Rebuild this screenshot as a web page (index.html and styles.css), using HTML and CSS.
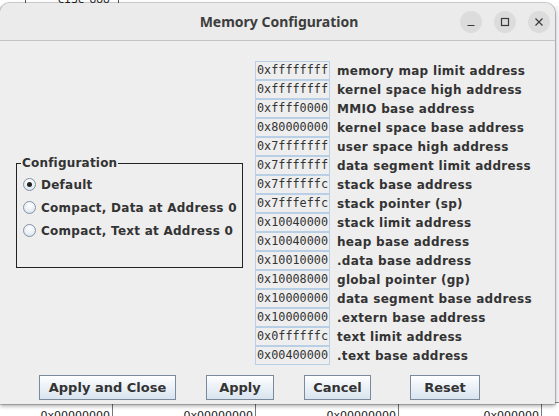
FILE: index.html
```html
<!DOCTYPE html>
<html>
<head>
<meta charset="utf-8">
<link rel="stylesheet" href="styles.css">
</head>
<body>
<div class="desktop">
  <div class="desk-top">
    <span class="dt-line l1"></span><span class="dt-text">c13c_ooo</span><span class="dt-line l2"></span>
  </div>
  <div class="desk-bottom">
    <span class="db-cell c1">0x00000000</span>
    <span class="db-cell">0x00000000</span>
    <span class="db-cell">0x00000000</span>
    <span class="db-cell">0x000000</span>
  </div>
</div>

<div class="window">
  <div class="titlebar">
    <div class="title">Memory Configuration</div>
    <div class="wbtns">
      <span class="wbtn"><svg width="12" height="12" viewBox="0 0 12 12"><path d="M2.5 9.5h7" stroke="#3a3a3a" stroke-width="1.2" fill="none"/></svg></span>
      <span class="wbtn"><svg width="12" height="12" viewBox="0 0 12 12"><rect x="2.5" y="2.5" width="7" height="7" stroke="#3a3a3a" stroke-width="1.2" fill="none"/></svg></span>
      <span class="wbtn"><svg width="12" height="12" viewBox="0 0 12 12"><path d="M2.5 2.5l7 7M9.5 2.5l-7 7" stroke="#3a3a3a" stroke-width="1.2" fill="none"/></svg></span>
    </div>
  </div>
  <div class="content">
    <div class="main">
      <div class="left">
        <fieldset class="group">
          <legend>Configuration</legend>
          <div class="radio"><span class="dot on"></span>Default</div>
          <div class="radio"><span class="dot"></span>Compact, Data at Address 0</div>
          <div class="radio"><span class="dot"></span>Compact, Text at Address 0</div>
        </fieldset>
      </div>
      <div class="rows">
        <div class="row"><span class="val">0xffffffff</span><span class="lbl">memory map limit address</span></div>
        <div class="row"><span class="val">0xffffffff</span><span class="lbl">kernel space high address</span></div>
        <div class="row"><span class="val">0xffff0000</span><span class="lbl">MMIO base address</span></div>
        <div class="row"><span class="val">0x80000000</span><span class="lbl">kernel space base address</span></div>
        <div class="row"><span class="val">0x7fffffff</span><span class="lbl">user space high address</span></div>
        <div class="row"><span class="val">0x7fffffff</span><span class="lbl">data segment limit address</span></div>
        <div class="row"><span class="val">0x7ffffffc</span><span class="lbl">stack base address</span></div>
        <div class="row"><span class="val">0x7fffeffc</span><span class="lbl">stack pointer (sp)</span></div>
        <div class="row"><span class="val">0x10040000</span><span class="lbl">stack limit address</span></div>
        <div class="row"><span class="val">0x10040000</span><span class="lbl">heap base address</span></div>
        <div class="row"><span class="val">0x10010000</span><span class="lbl">.data base address</span></div>
        <div class="row"><span class="val">0x10008000</span><span class="lbl">global pointer (gp)</span></div>
        <div class="row"><span class="val">0x10000000</span><span class="lbl">data segment base address</span></div>
        <div class="row"><span class="val">0x10000000</span><span class="lbl">.extern base address</span></div>
        <div class="row"><span class="val">0x0ffffffc</span><span class="lbl">text limit address</span></div>
        <div class="row"><span class="val">0x00400000</span><span class="lbl">.text base address</span></div>
      </div>
    </div>
    <div class="buttons">
      <button class="btn b1">Apply and Close</button>
      <button class="btn b2">Apply</button>
      <button class="btn b3">Cancel</button>
      <button class="btn b4">Reset</button>
    </div>
  </div>
</div>
</body>
</html>
```

FILE: styles.css
```css
* { box-sizing: border-box; }
html, body { margin: 0; padding: 0; }
body {
  width: 559px;
  height: 416px;
  overflow: hidden;
  position: relative;
  background: #ffffff;
  font-family: "DejaVu Sans", sans-serif;
}
.desktop {
  width: 559px;
  height: 416px;
  display: flex;
  flex-direction: column;
  justify-content: space-between;
  background: #f4f6f8;
}
.desk-top {
  height: 6px;
  position: relative;
  background: #ffffff;
  overflow: hidden;
}
.dt-line { position: absolute; top: 0; width: 1px; height: 6px; background: #555; }
.dt-line.l1 { left: 25px; }
.dt-line.l2 { left: 118px; }
.dt-text {
  position: absolute; left: 58px; top: -7px;
  font: 11px "DejaVu Sans", sans-serif; color: #222;
}
.desk-bottom {
  height: 14px;
  display: flex;
  background: #ffffff;
  border-top: 1px solid #8a8a8a;
  overflow: hidden;
}
.db-cell {
  width: 143px;
  flex: none;
  border-right: 1px solid #777;
  font: 11px "DejaVu Sans", sans-serif;
  color: #222;
  text-align: right;
  padding-right: 2px;
  line-height: 12px;
  padding-top: 7px;
  height: 20px;
  overflow: hidden;
}
.db-cell.c1 { width: 113px; }
.window {
  position: absolute;
  left: 0;
  top: 3px;
  width: 555px;
  height: 401px;
  background: #eeeeee;
  border-radius: 10px 10px 0 0;
  box-shadow: 0 0 0 1px rgba(0,0,0,0.18), 0 2px 4px rgba(0,0,0,0.35);
  display: flex;
  flex-direction: column;
  overflow: hidden;
}
.titlebar {
  height: 38px;
  flex: none;
  background: #ebebeb;
  border-bottom: 1px solid #c4c4c4;
  display: flex;
  align-items: center;
  justify-content: center;
  position: relative;
}
.title {
  font-family: "Noto Sans", sans-serif;
  font-weight: bold;
  font-size: 14px;
  color: #3d3d3d;
  padding-left: 3px;
}
.wbtns {
  position: absolute;
  right: 5px;
  top: 8px;
  display: flex;
  gap: 12px;
}
.wbtn {
  width: 22px;
  height: 22px;
  border-radius: 50%;
  background: #dcdcdc;
  display: flex;
  align-items: center;
  justify-content: center;
}
.content {
  flex: 1;
  display: flex;
  flex-direction: column;
  padding-top: 20px;
}
.main {
  display: flex;
  gap: 12px;
}
.left {
  width: 243px;
  padding-left: 16px;
  padding-top: 95px;
}
.group {
  margin: 0;
  width: 227px;
  height: 112px;
  border: 1px solid #222;
  padding: 3px 0 0 6px;
  position: relative;
}
.group legend {
  padding: 0 1px;
  margin-left: -2px;
  font-weight: bold;
  font-size: 12px;
  color: #333;
  line-height: 14px;
  letter-spacing: 0.2px;
}
.radio {
  height: 23px;
  display: flex;
  align-items: center;
  font-weight: bold;
  font-size: 12px;
  color: #333;
  letter-spacing: 0.25px;
}
.dot {
  width: 13px;
  height: 13px;
  border-radius: 50%;
  border: 1px solid #8593a3;
  background: radial-gradient(circle at 50% 30%, #ffffff 0%, #e8eef5 60%, #c8d4e2 100%);
  margin-right: 5px;
  position: relative;
  flex: none;
}
.dot.on::after {
  content: "";
  position: absolute;
  left: 3px; top: 3px;
  width: 5px; height: 5px;
  border-radius: 50%;
  background: #222;
}
.rows {
  display: flex;
  flex-direction: column;
}
.row {
  height: 19px;
  display: flex;
  align-items: center;
}
.val {
  width: 75px;
  height: 19px;
  border: 1px solid #b8cfe5;
  margin-top: -1px;
  background: #eeeeee;
  font-family: "DejaVu Sans Mono", monospace;
  font-size: 11.8px;
  color: #333;
  line-height: 17px;
  padding-left: 1px;
  white-space: nowrap;
  overflow: hidden;
}
.row:first-child .val { margin-top: 0; }
.lbl {
  margin-left: 7px;
  font-weight: bold;
  font-size: 12px;
  color: #333;
  letter-spacing: 0.3px;
  white-space: nowrap;
}
.buttons {
  margin-top: 10px;
  display: flex;
  padding-left: 39px;
}
.btn {
  height: 25px;
  border: 1px solid #7a8a9a;
  background: linear-gradient(to bottom, #ffffff 0%, #eef3f8 40%, #d9e4ef 100%);
  font-family: "DejaVu Sans", sans-serif;
  font-weight: bold;
  font-size: 13px;
  color: #333;
  padding: 0;
  border-radius: 0;
}
.b1 { width: 137px; }
.b2 { width: 68px; margin-left: 30px; }
.b3 { width: 67px; margin-left: 30px; }
.b4 { width: 70px; margin-left: 39px; }
```
